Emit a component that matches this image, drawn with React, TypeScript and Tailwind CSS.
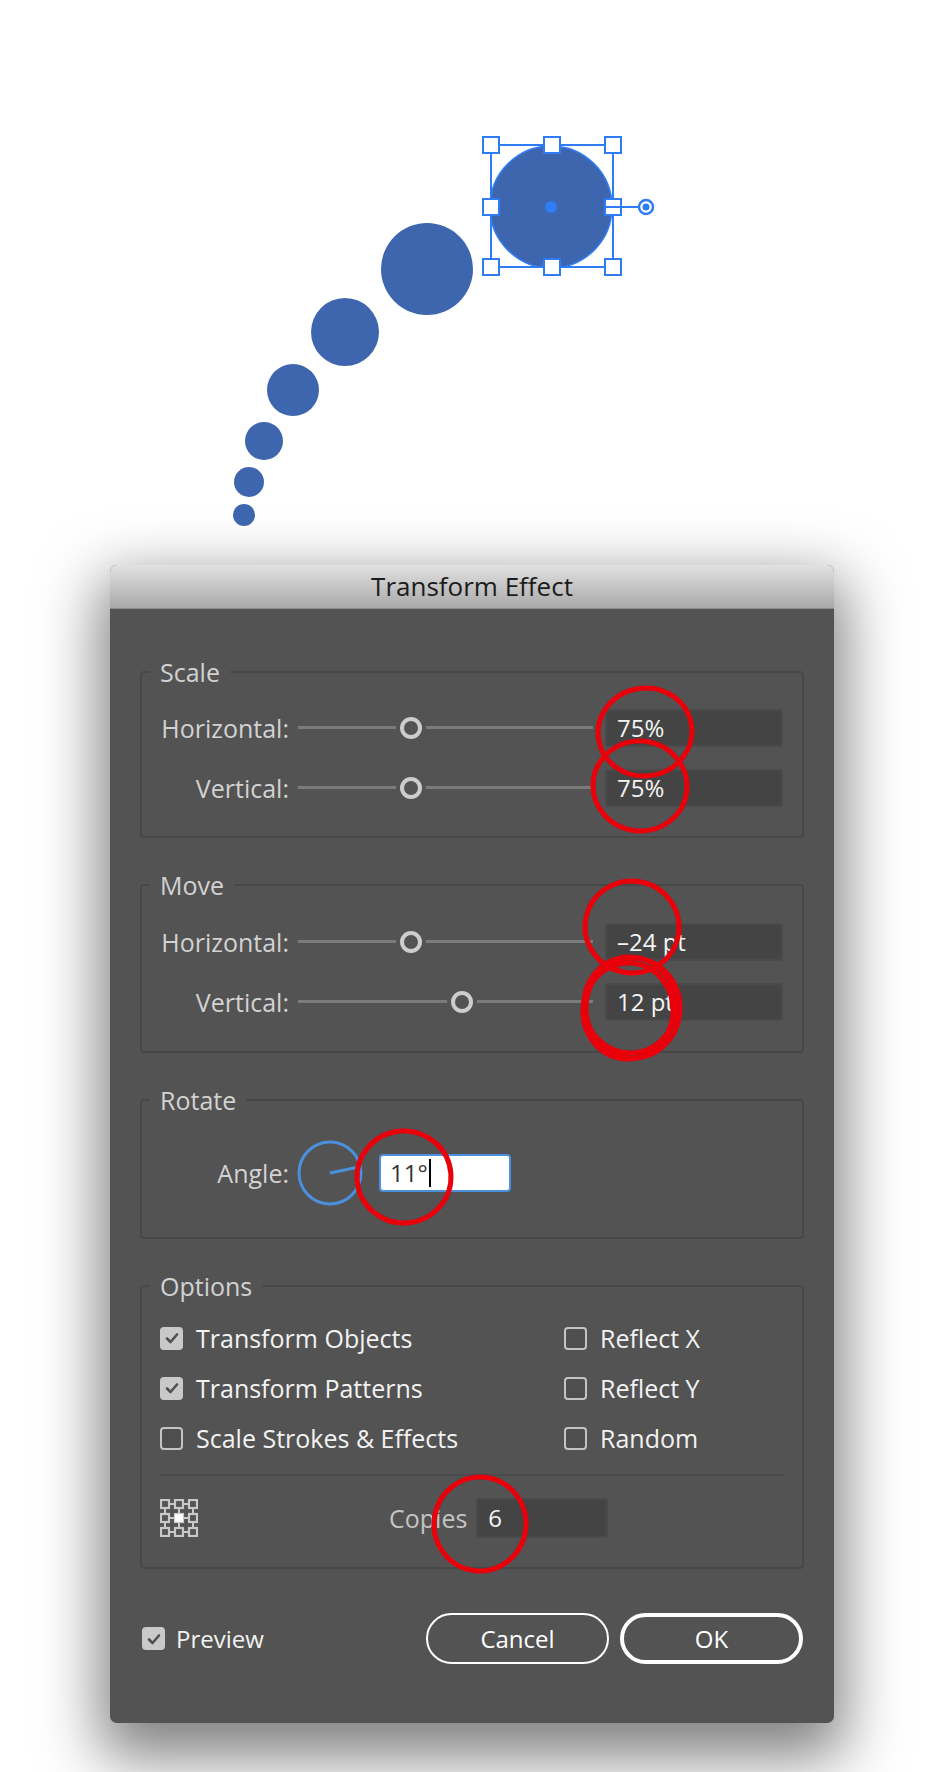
// Transform Effect dialog (Illustrator) with the preview artwork above it.

const BLUE = '#2f7cf6';
const DOT = '#3d66ae';

const trail = [
  { cx: 427, cy: 269, r: 46 },
  { cx: 345, cy: 332, r: 34 },
  { cx: 293, cy: 390, r: 26 },
  { cx: 264, cy: 441, r: 19 },
  { cx: 249, cy: 482, r: 15 },
  { cx: 244, cy: 515, r: 11 },
];

const handles = [
  [491, 145], [552, 145], [613, 145],
  [491, 207], [613, 207],
  [491, 267], [552, 267], [613, 267],
];

function Artwork() {
  return (
    <svg width={930} height={565} className="block">
      {trail.map((c, i) => (
        <circle key={i} cx={c.cx} cy={c.cy} r={c.r} fill={DOT} />
      ))}
      <circle cx={551} cy={207} r={61} fill={DOT} stroke={BLUE} strokeWidth={1.5} />
      <rect x={491} y={145} width={122} height={122} fill="none" stroke={BLUE} strokeWidth={2} />
      <line x1={613} y1={207} x2={639} y2={207} stroke={BLUE} strokeWidth={2} />
      {handles.map(([x, y], i) => (
        <rect key={i} x={x - 8} y={y - 8} width={16} height={16} fill="#fff" stroke={BLUE} strokeWidth={2} />
      ))}
      <line x1={606} y1={207} x2={621} y2={207} stroke={BLUE} strokeWidth={2} />
      <circle cx={551} cy={207} r={6} fill={BLUE} />
      <circle cx={646} cy={207} r={7} fill="#fff" stroke={BLUE} strokeWidth={2.5} />
      <circle cx={646} cy={207} r={3.5} fill={BLUE} />
    </svg>
  );
}

function Slider({ knob }: { knob: number }) {
  return (
    <div className="relative ml-[9px] h-[24px] w-[295px]">
      <div className="absolute inset-x-0 top-[10px] h-[3px] bg-[#7b7b7b]" />
      <div
        className="absolute top-[1px] h-[22px] w-[22px] rounded-full border-[4px] border-[#cdcdcd] bg-[#535353] shadow-[0_0_0_4px_#535353]"
        style={{ left: knob - 11 }}
      />
    </div>
  );
}

function Field({ value, className = '' }: { value: string; className?: string }) {
  return (
    <div
      className={`flex h-[38px] items-center rounded-[3px] border-2 border-[#4a4a4a] bg-[#444444] pl-[10px] text-[24px] text-[#f4f4f4] ${className}`}
    >
      {value}
    </div>
  );
}

function SliderRow({ label, knob, value }: { label: string; knob: number; value: string }) {
  return (
    <div className="flex items-center">
      <div className="w-[147px] text-right text-[25px] leading-[30px] text-[#d2d2d2]">{label}</div>
      <Slider knob={knob} />
      <Field value={value} className="ml-[12px] w-[178px]" />
    </div>
  );
}

function Group({ title, children }: { title: string; children: React.ReactNode }) {
  return (
    <fieldset className="rounded-[4px] border-2 border-[#484848]">
      <legend className="ml-[8px] px-[10px] text-[25px] leading-[30px] text-[#d2d2d2]">{title}</legend>
      {children}
    </fieldset>
  );
}

function Check({ on }: { on: boolean }) {
  if (on) {
    return (
      <div className="flex h-[23px] w-[23px] shrink-0 items-center justify-center rounded-[4px] bg-[#c9c9c9]">
        <svg width={16} height={16} viewBox="0 0 16 16">
          <path d="M3 8.5 L6.5 12 L13 4.5" fill="none" stroke="#505050" strokeWidth={2.6} strokeLinecap="round" strokeLinejoin="round" />
        </svg>
      </div>
    );
  }
  return <div className="h-[23px] w-[23px] shrink-0 rounded-[4px] border-2 border-[#c4c4c4] bg-[#4e4e4e]" />;
}

function Option({ label, on }: { label: string; on: boolean }) {
  return (
    <div className="flex h-[30px] items-center gap-[13px]">
      <Check on={on} />
      <span className="text-[25px] leading-[30px] text-[#f2f2f2]">{label}</span>
    </div>
  );
}

function PointGrid() {
  const pts = [5, 19, 33];
  return (
    <svg width={38} height={38} viewBox="0 0 38 38">
      {pts.map(y => (
        <line key={'h' + y} x1={5} y1={y} x2={33} y2={y} stroke="#c8c8c8" strokeWidth={2} />
      ))}
      {pts.map(x => (
        <line key={'v' + x} x1={x} y1={5} x2={x} y2={33} stroke="#c8c8c8" strokeWidth={2} />
      ))}
      {pts.flatMap(y =>
        pts.map(x => (
          <rect key={x + '-' + y} x={x - 4} y={y - 4} width={8} height={8} fill="#535353" stroke="#c8c8c8" strokeWidth={2.2} />
        )),
      )}
      <rect x={15} y={15} width={8} height={8} fill="#ffffff" />
    </svg>
  );
}

function Dial() {
  return (
    <svg width={66} height={66} viewBox="0 0 66 66" className="ml-[8px]">
      <circle cx={33} cy={33} r={31} fill="none" stroke="#4a90dd" strokeWidth={3} />
      <line x1={33} y1={33} x2={62} y2={27} stroke="#4a90dd" strokeWidth={3} />
    </svg>
  );
}

function Annotations() {
  const rings = [
    { cx: 645, cy: 732, rx: 47, ry: 44, rot: -8 },
    { cx: 640, cy: 786, rx: 47, ry: 45, rot: 6 },
    { cx: 632, cy: 927, rx: 47, ry: 46, rot: 10 },
    { cx: 630, cy: 1005, rx: 46, ry: 48, rot: -6 },
    { cx: 628, cy: 1011, rx: 45, ry: 48, rot: 4 },
    { cx: 633, cy: 1008, rx: 47, ry: 50, rot: 0 },
    { cx: 404, cy: 1177, rx: 47, ry: 46, rot: -4 },
    { cx: 480, cy: 1524, rx: 46, ry: 47, rot: 8 },
  ];
  return (
    <svg width={930} height={1772} className="pointer-events-none absolute left-0 top-0">
      {rings.map((r, i) => (
        <ellipse
          key={i}
          cx={r.cx}
          cy={r.cy}
          rx={r.rx}
          ry={r.ry}
          transform={`rotate(${r.rot} ${r.cx} ${r.cy})`}
          fill="none"
          stroke="#e8000b"
          strokeWidth={5}
        />
      ))}
    </svg>
  );
}

export default function App() {
  return (
    <div className="relative h-[1772px] w-[930px] overflow-hidden bg-white font-['Open_Sans',sans-serif]">
      <Artwork />

      <div className="ml-[110px] flex h-[1158px] w-[724px] flex-col overflow-hidden rounded-[7px] bg-[#535353] shadow-[0_24px_60px_10px_rgba(0,0,0,0.5)]">
        <div className="flex h-[44px] shrink-0 items-center justify-center border-b border-[#8c8c8c] bg-linear-to-b from-[#e2e2e2] to-[#a9a9a9] text-[26px] text-[#1c1c1c]">
          Transform Effect
        </div>

        <div className="flex flex-col gap-[32px] px-[30px] pt-[48px]">
          <Group title="Scale">
            <div className="flex flex-col gap-[22px] pb-[29px] pr-[18px] pt-[22px]">
              <SliderRow label="Horizontal:" knob={113} value="75%" />
              <SliderRow label="Vertical:" knob={113} value="75%" />
            </div>
          </Group>

          <Group title="Move">
            <div className="flex flex-col gap-[22px] pb-[30px] pr-[18px] pt-[23px]">
              <SliderRow label="Horizontal:" knob={113} value="–24 pt" />
              <SliderRow label="Vertical:" knob={164} value="12 pt" />
            </div>
          </Group>

          <Group title="Rotate">
            <div className="flex h-[66px] items-center mb-[31px] mt-[25px]">
              <div className="w-[147px] text-right text-[25px] leading-[30px] text-[#d2d2d2]">Angle:</div>
              <Dial />
              <div className="ml-[16px] flex h-[38px] w-[132px] items-center rounded-[4px] border-2 border-[#4a90dd] bg-white pl-[9px] text-[24px] text-[#333333]">
                11°
                <span className="ml-[1px] h-[28px] w-[2px] bg-black" />
              </div>
            </div>
          </Group>

          <Group title="Options">
            <div className="px-[18px] pb-[29px] pt-[22px]">
              <div className="grid grid-cols-[404px_1fr] gap-y-[20px]">
                <Option label="Transform Objects" on />
                <Option label="Reflect X" on={false} />
                <Option label="Transform Patterns" on />
                <Option label="Reflect Y" on={false} />
                <Option label="Scale Strokes & Effects" on={false} />
                <Option label="Random" on={false} />
              </div>
              <div className="mt-[21px] h-[2px] bg-[#4a4a4a]" />
              <div className="mt-[22px] flex items-center">
                <PointGrid />
                <span className="ml-[191px] text-[25px] leading-[30px] text-[#c4c4c4]">Copies</span>
                <div className="ml-[9px] flex h-[40px] w-[132px] items-center rounded-[3px] border-2 border-[#4a4a4a] bg-[#444444] pl-[10px] text-[24px] text-[#f4f4f4]">
                  6
                </div>
              </div>
            </div>
          </Group>
        </div>

        <div className="mt-[44px] flex items-center pl-[32px] pr-[31px]">
          <Check on />
          <span className="ml-[11px] text-[24px] text-[#f2f2f2]">Preview</span>
          <div className="ml-auto flex gap-[11px]">
            <button className="h-[51px] w-[183px] rounded-full border-2 border-white text-[24px] text-white">
              Cancel
            </button>
            <button className="h-[51px] w-[183px] rounded-full border-[4px] border-white text-[24px] text-white">
              OK
            </button>
          </div>
        </div>
      </div>

      <Annotations />
    </div>
  );
}
